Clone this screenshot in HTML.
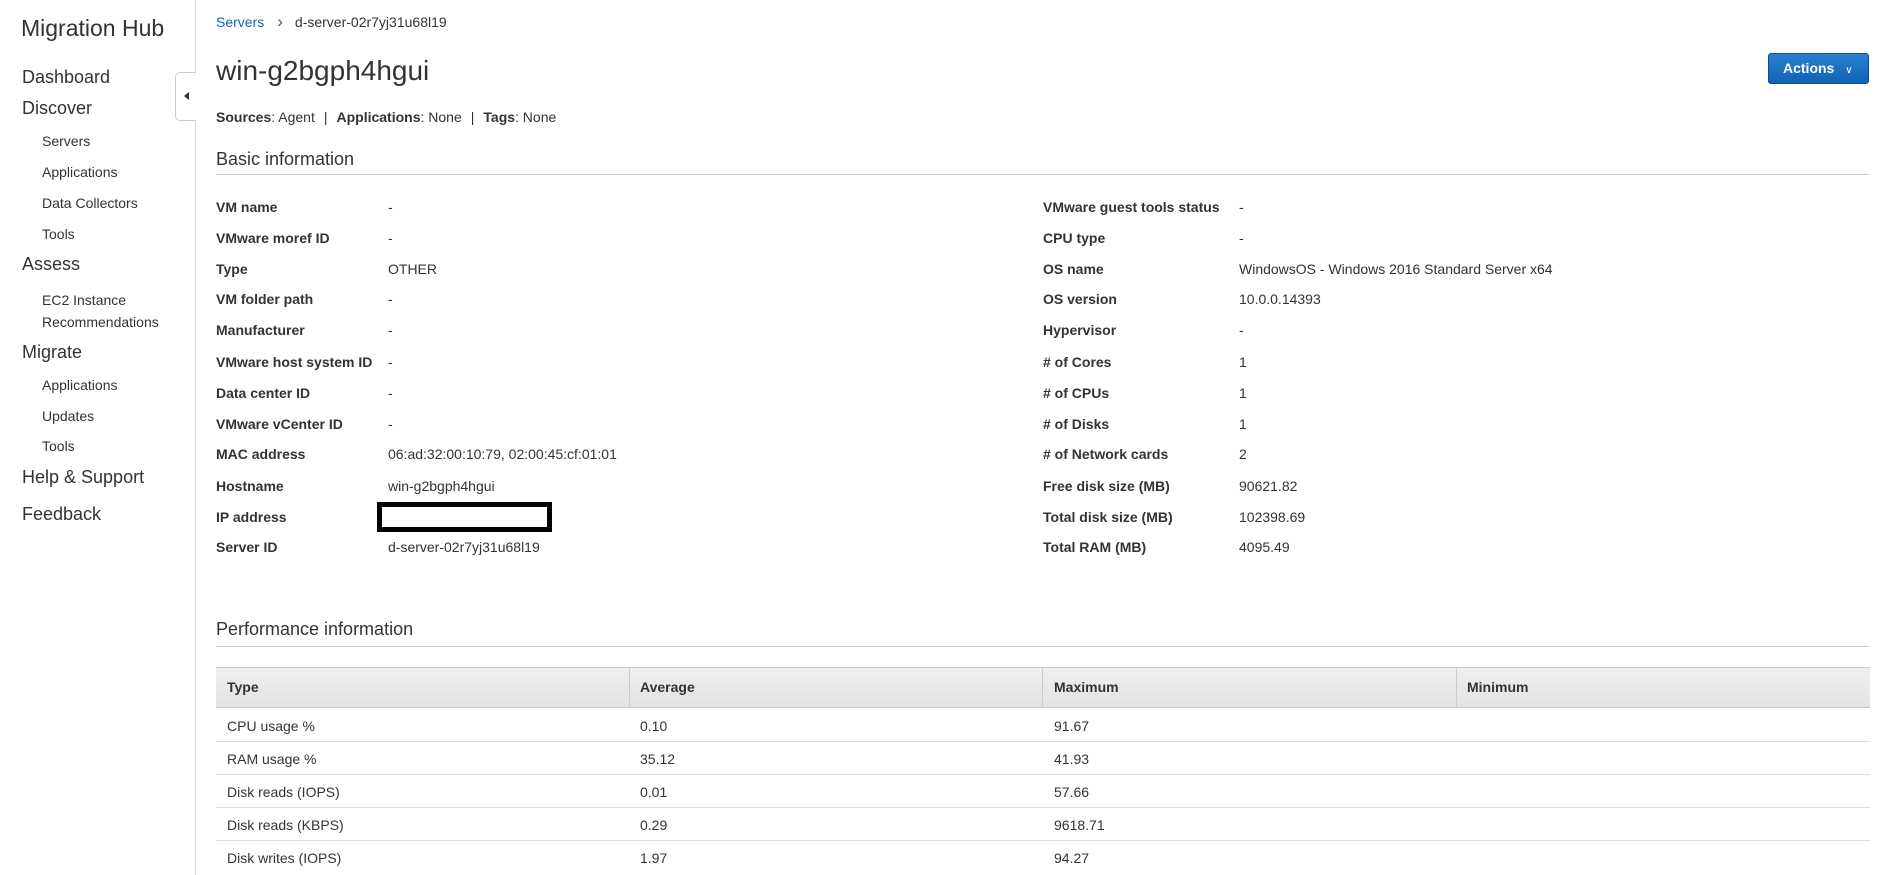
<!DOCTYPE html>
<html><head><meta charset="utf-8"><style>
*{margin:0;padding:0;box-sizing:border-box}
body{width:1885px;height:875px;overflow:hidden;background:#fff;font-family:"Liberation Sans",Arial,sans-serif;color:#333;position:relative}
.t{position:absolute;line-height:20px;white-space:nowrap}
.top{font-size:18px;left:22px;color:#333}
.sub{font-size:14px;left:42px;color:#333}
.l{font-size:14px;font-weight:bold;left:216px}
.v{font-size:14px;left:388px}
.l2{font-size:14px;font-weight:bold;left:1043px}
.v2{font-size:14px;left:1239px}
.c{font-size:14px}
.sep{display:inline-block;margin:0 9px}
</style></head><body>
<div style="position:absolute;left:195px;top:0;width:1px;height:875px;background:#d5d5d5"></div>
<div style="position:absolute;left:175px;top:72px;width:21px;height:49px;border:1px solid #ccc;border-right:none;border-radius:5px 0 0 5px;background:#fff"></div>
<div style="position:absolute;left:184px;top:92px;width:0;height:0;border-top:4px solid transparent;border-bottom:4px solid transparent;border-right:5px solid #333"></div>

<div class="t" style="left:21px;top:16px;font-size:23px;line-height:24px">Migration Hub</div>
<div class="t top" style="top:67px">Dashboard</div>
<div class="t top" style="top:98px">Discover</div>
<div class="t sub" style="top:131px">Servers</div>
<div class="t sub" style="top:162px">Applications</div>
<div class="t sub" style="top:193px">Data Collectors</div>
<div class="t sub" style="top:224px">Tools</div>
<div class="t top" style="top:254px">Assess</div>
<div class="t sub" style="top:290px">EC2 Instance</div>
<div class="t sub" style="top:312px">Recommendations</div>
<div class="t top" style="top:342px">Migrate</div>
<div class="t sub" style="top:375px">Applications</div>
<div class="t sub" style="top:406px">Updates</div>
<div class="t sub" style="top:436px">Tools</div>
<div class="t top" style="top:467px">Help &amp; Support</div>
<div class="t top" style="top:504px">Feedback</div>

<div class="t" style="left:216px;top:12px;font-size:14px"><span style="color:#1166bb">Servers</span><span style="margin:0 12px 0 13px;color:#555;font-size:17px">&#x203A;</span>d-server-02r7yj31u68l19</div>
<div class="t" style="left:216px;top:54px;font-size:28px;line-height:34px">win-g2bgph4hgui</div>
<div style="position:absolute;left:1768px;top:53px;width:101px;height:31px;background:linear-gradient(#2a7fd0,#1063b5);border:1px solid #0c4e8f;border-radius:3px;color:#fff;font-weight:bold;font-size:14px;line-height:29px;padding-left:14px">Actions <span style="font-size:10px;margin-left:7px;font-weight:normal">&#x2228;</span></div>
<div class="t" style="left:216px;top:107px;font-size:14px"><b>Sources</b>: Agent<span class="sep">|</span><b>Applications</b>: None<span class="sep">|</span><b>Tags</b>: None</div>
<div class="t" style="left:216px;top:148px;font-size:18px;line-height:22px">Basic information</div>
<div style="position:absolute;left:216px;top:174px;width:1653px;height:1px;background:#ccc"></div>

<div class="t l" style="top:197px">VM name</div><div class="t v" style="top:197px">-</div>
<div class="t l" style="top:228px">VMware moref ID</div><div class="t v" style="top:228px">-</div>
<div class="t l" style="top:259px">Type</div><div class="t v" style="top:259px">OTHER</div>
<div class="t l" style="top:289px">VM folder path</div><div class="t v" style="top:289px">-</div>
<div class="t l" style="top:320px">Manufacturer</div><div class="t v" style="top:320px">-</div>
<div class="t l" style="top:352px">VMware host system ID</div><div class="t v" style="top:352px">-</div>
<div class="t l" style="top:383px">Data center ID</div><div class="t v" style="top:383px">-</div>
<div class="t l" style="top:414px">VMware vCenter ID</div><div class="t v" style="top:414px">-</div>
<div class="t l" style="top:444px">MAC address</div><div class="t v" style="top:444px">06:ad:32:00:10:79, 02:00:45:cf:01:01</div>
<div class="t l" style="top:476px">Hostname</div><div class="t v" style="top:476px">win-g2bgph4hgui</div>
<div class="t l" style="top:507px">IP address</div>
<div style="position:absolute;left:377px;top:502px;width:175px;height:30px;border:5px solid #000"></div>
<div class="t l" style="top:537px">Server ID</div><div class="t v" style="top:537px">d-server-02r7yj31u68l19</div>

<div class="t l2" style="top:197px">VMware guest tools status</div><div class="t v2" style="top:197px">-</div>
<div class="t l2" style="top:228px">CPU type</div><div class="t v2" style="top:228px">-</div>
<div class="t l2" style="top:259px">OS name</div><div class="t v2" style="top:259px">WindowsOS - Windows 2016 Standard Server x64</div>
<div class="t l2" style="top:289px">OS version</div><div class="t v2" style="top:289px">10.0.0.14393</div>
<div class="t l2" style="top:320px">Hypervisor</div><div class="t v2" style="top:320px">-</div>
<div class="t l2" style="top:352px"># of Cores</div><div class="t v2" style="top:352px">1</div>
<div class="t l2" style="top:383px"># of CPUs</div><div class="t v2" style="top:383px">1</div>
<div class="t l2" style="top:414px"># of Disks</div><div class="t v2" style="top:414px">1</div>
<div class="t l2" style="top:444px"># of Network cards</div><div class="t v2" style="top:444px">2</div>
<div class="t l2" style="top:476px">Free disk size (MB)</div><div class="t v2" style="top:476px">90621.82</div>
<div class="t l2" style="top:507px">Total disk size (MB)</div><div class="t v2" style="top:507px">102398.69</div>
<div class="t l2" style="top:537px">Total RAM (MB)</div><div class="t v2" style="top:537px">4095.49</div>

<div class="t" style="left:216px;top:618px;font-size:18px;line-height:22px">Performance information</div>
<div style="position:absolute;left:216px;top:646px;width:1653px;height:1px;background:#ccc"></div>

<div style="position:absolute;left:216px;top:667px;width:1654px;height:41px;background:linear-gradient(#f0f0f0,#e2e2e2);border-top:1px solid #ccc;border-bottom:1px solid #c8c8c8"></div>
<div style="position:absolute;left:629px;top:667px;width:1px;height:41px;background:#ccc"></div>
<div style="position:absolute;left:1042px;top:667px;width:1px;height:41px;background:#ccc"></div>
<div style="position:absolute;left:1456px;top:667px;width:1px;height:41px;background:#ccc"></div>
<div class="t c" style="left:227px;top:677px;font-weight:bold">Type</div>
<div class="t c" style="left:640px;top:677px;font-weight:bold">Average</div>
<div class="t c" style="left:1054px;top:677px;font-weight:bold">Maximum</div>
<div class="t c" style="left:1467px;top:677px;font-weight:bold">Minimum</div>

<div style="position:absolute;left:216px;top:741px;width:1654px;height:1px;background:#ddd"></div>
<div style="position:absolute;left:216px;top:774px;width:1654px;height:1px;background:#ddd"></div>
<div style="position:absolute;left:216px;top:807px;width:1654px;height:1px;background:#ddd"></div>
<div style="position:absolute;left:216px;top:840px;width:1654px;height:1px;background:#ddd"></div>

<div class="t c" style="left:227px;top:716px">CPU usage %</div><div class="t c" style="left:640px;top:716px">0.10</div><div class="t c" style="left:1054px;top:716px">91.67</div>
<div class="t c" style="left:227px;top:749px">RAM usage %</div><div class="t c" style="left:640px;top:749px">35.12</div><div class="t c" style="left:1054px;top:749px">41.93</div>
<div class="t c" style="left:227px;top:782px">Disk reads (IOPS)</div><div class="t c" style="left:640px;top:782px">0.01</div><div class="t c" style="left:1054px;top:782px">57.66</div>
<div class="t c" style="left:227px;top:815px">Disk reads (KBPS)</div><div class="t c" style="left:640px;top:815px">0.29</div><div class="t c" style="left:1054px;top:815px">9618.71</div>
<div class="t c" style="left:227px;top:848px">Disk writes (IOPS)</div><div class="t c" style="left:640px;top:848px">1.97</div><div class="t c" style="left:1054px;top:848px">94.27</div>
</body></html>
